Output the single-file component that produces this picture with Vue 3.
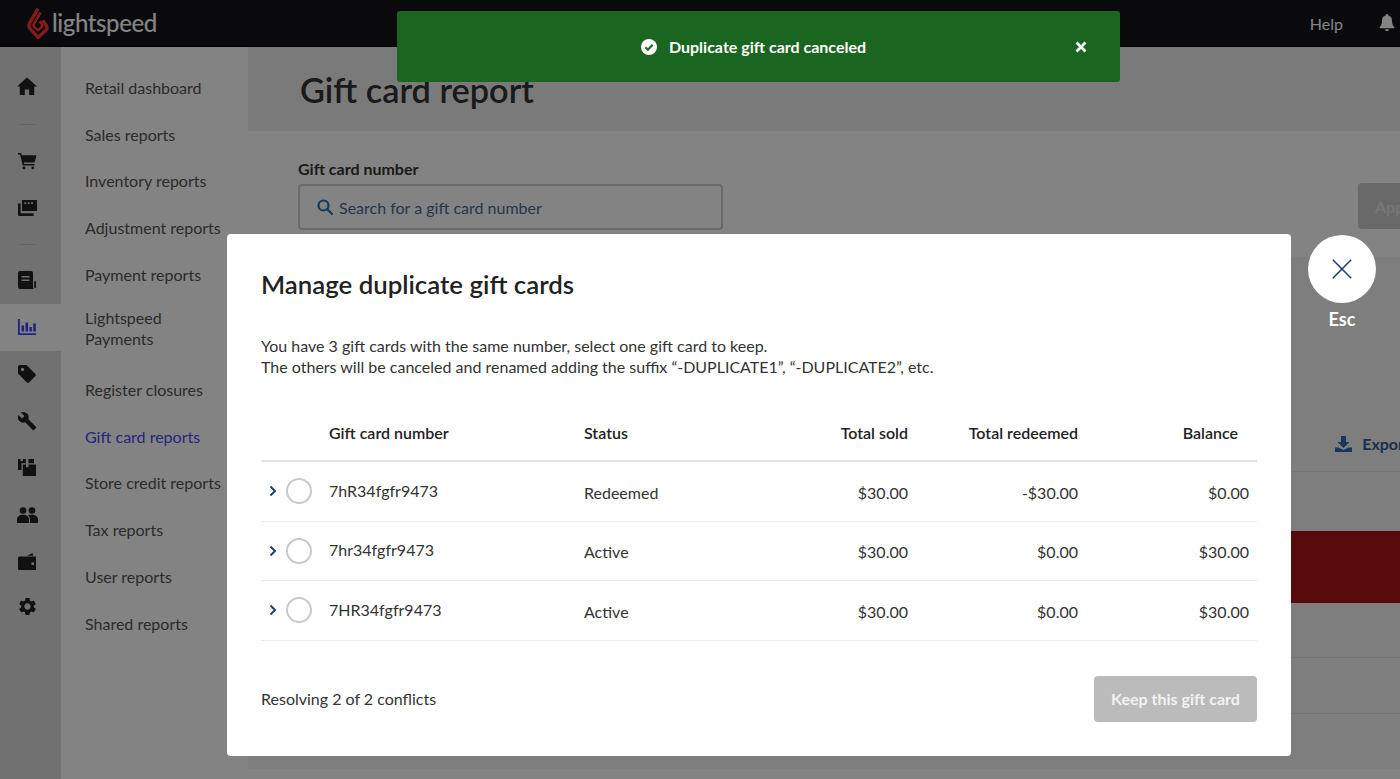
<template>
  <div class="page">
    <header class="topbar">
      <div class="logo">
        <svg class="flame" viewBox="0 0 22 32" width="22" height="32">
          <path d="M11 1.500 2.600 16.200c-1 1.800-.8 3.800.5 5.300L11 30.500l7.200-6.400c1.900-1.800 2.100-4.300.7-6.200l-3.400-4.600" fill="none" stroke="#b01c1c" stroke-width="3.400" stroke-linejoin="round" />
          <path d="M13.600 5.500 7 16.600c-.8 1.400-.5 2.900.6 3.800l3.400 2.900 3.400-3c1-1 1-2.300.2-3.300l-2-2.600" fill="none" stroke="#b01c1c" stroke-width="2.600" stroke-linejoin="round" />
        </svg>
        <span class="logo-text">lightspeed</span>
      </div>
      <div class="top-right">
        <span class="help">Help</span>
        <svg viewBox="0 0 16 18" width="16" height="18" fill="#9a9a9a">
          <path d="M8 0a1.300 1.300 0 0 0-1.300 1.400C4.200 2 3 4 3 6.500c0 4-1.200 5.300-2.300 6.500-.4.500-.1 1.200.6 1.200h13.400c.7 0 1-.7.6-1.200C14.200 11.800 13 10.500 13 6.500c0-2.500-1.200-4.500-3.700-5.100A1.300 1.300 0 0 0 8 0Z" />
          <path d="M6 15.300h4a2 2 0 0 1-4 0Z" />
        </svg>
      </div>
    </header>

    <div class="body">
      <nav class="rail">
        <a class="rail-item">
          <svg viewBox="0 0 20 18" width="20" height="18"><path d="M10 .5 20 9.500h-2.800V18h-5v-5.600H7.800V18h-5V9.500H0Z" /></svg>
        </a>
        <div class="rail-sep"><i></i></div>
        <a class="rail-item">
          <svg viewBox="0 0 20 18" width="19" height="18"><path d="M0 .5h3.300l.7 2.500h15.500l-2 7.500H6l.4 1.700h11v1.600H5L2.200 2.100H0Z" /><circle cx="6.300" cy="16.300" r="1.500" /><circle cx="15.500" cy="16.300" r="1.500" /></svg>
        </a>
        <a class="rail-item">
          <svg viewBox="0 0 19 16" width="19" height="16">
            <path d="M4 0h15v11H4Zm2.500 2.200v1.800h1.800V2.200Zm3.300 0v1.800h1.800V2.200Zm3.300 0v1.800h1.800V2.200Z" fill-rule="evenodd" />
            <path d="M0 3.500h2.600v9.700h13v2.700H1.500A1.500 1.500 0 0 1 0 14.400Z" />
          </svg>
        </a>
        <div class="rail-sep"><i></i></div>
        <a class="rail-item">
          <svg viewBox="0 0 18 18" width="18" height="18">
            <path d="M2 0h11a2 2 0 0 1 2 2v14a2 2 0 0 0 .6 1.500V18H2a2 2 0 0 1-2-2V2a2 2 0 0 1 2-2Zm1.500 5v1.500h8V5Zm0 3.500V10h8V8.500Z" fill-rule="evenodd" />
            <rect x="16.200" y="10" width="1.800" height="7" rx=".9" />
          </svg>
        </a>
        <a class="rail-item active">
          <svg viewBox="0 0 18 16" width="18" height="16"><path d="M0 0h1.800v14.200H18V16H0Zm3.500 6.500h2.600v6H3.500Zm4-3h2.600v9H7.500Zm4 4.500h2.400v4.500h-2.400Zm3.700-3.500h2.600v8h-2.600Z" /></svg>
        </a>
        <a class="rail-item">
          <svg viewBox="0 0 18 18" width="18" height="18"><path d="M0 1.500A1.500 1.500 0 0 1 1.500 0h7l8.900 8.900c.6.600.6 1.500 0 2.100l-6.400 6.400c-.6.600-1.500.6-2.100 0L0 8.500Zm4.500 4.700a1.700 1.700 0 1 0 0-3.400 1.700 1.700 0 0 0 0 3.400Z" fill-rule="evenodd" /></svg>
        </a>
        <a class="rail-item">
          <svg viewBox="0 0 24 24" width="20" height="20"><path d="M22.700 19l-9.100-9.100c.9-2.300.4-5-1.500-6.900-2-2-5-2.400-7.400-1.300L9 6 6 9 1.600 4.700C.4 7.100.9 10.100 2.900 12.100c1.900 1.900 4.600 2.400 6.900 1.500l9.100 9.100c.4.400 1 .4 1.400 0l2.300-2.300c.5-.4.5-1.100.1-1.400z" /></svg>
        </a>
        <a class="rail-item">
          <svg viewBox="0 0 18 17" width="18" height="17"><path d="M0 0h2.500v2H5V0h2.800v4.200H3.500V11H0Zm4.800 5.500H8v2.700h2.500V5.500H18V17H4.800Zm5.700-5.500H16v4.200h-5.500Z" /></svg>
        </a>
        <a class="rail-item">
          <svg viewBox="0 0 21 16" width="21" height="16">
            <circle cx="6" cy="3.500" r="3.300" /><circle cx="15" cy="3.500" r="3.300" />
            <path d="M0 16v-3.500C0 9.500 2.500 7.700 6 7.700s6 1.800 6 4.800V16Z" />
            <path d="M13 16v-3.500c0-1.900-.8-3.400-2-4.300 1-.4 2.500-.5 4-.5 3.500 0 6 1.800 6 4.800V16Z" />
          </svg>
        </a>
        <a class="rail-item">
          <svg viewBox="0 0 18 17" width="18" height="17"><path d="M9 2.800 14.500 0l.8 2.800Z" /><path d="M0 5a1.500 1.500 0 0 1 1.500-1.500H18V17H1.500A1.500 1.500 0 0 1 0 15.500Zm13.500 4.500v2.500H16V9.500Z" fill-rule="evenodd" /></svg>
        </a>
        <a class="rail-item gear">
          <svg viewBox="0 0 24 24" width="21" height="21"><path d="M19.140 12.940c.04-.3.06-.61.06-.94 0-.32-.02-.64-.07-.94l2.030-1.580c.18-.14.23-.41.12-.61l-1.920-3.320c-.12-.22-.37-.29-.59-.22l-2.390.96c-.5-.38-1.030-.7-1.620-.94l-.36-2.540c-.04-.24-.24-.41-.48-.41h-3.840c-.24 0-.43.17-.47.41l-.36 2.540c-.59.24-1.130.57-1.620.94l-2.390-.96c-.22-.08-.47 0-.59.22L2.740 8.870c-.12.21-.08.47.12.61l2.030 1.580c-.05.3-.09.63-.09.94s.02.64.07.94l-2.030 1.580c-.18.14-.23.41-.12.61l1.920 3.320c.12.22.37.29.59.22l2.390-.96c.5.38 1.030.7 1.620.94l.36 2.540c.05.24.24.41.48.41h3.840c.24 0 .44-.17.47-.41l.36-2.540c.59-.24 1.130-.56 1.620-.94l2.390.96c.22.08.47 0 .59-.22l1.920-3.320c.12-.22.07-.47-.12-.61l-2.010-1.580zM12 15.600c-1.980 0-3.600-1.620-3.600-3.600s1.620-3.600 3.600-3.600 3.600 1.620 3.600 3.600-1.620 3.600-3.600 3.600z" /></svg>
        </a>
      </nav>

      <aside class="subnav">
        <a
          v-for="link in reportLinks"
          :key="link.label"
          class="subnav-item"
          :class="{ current: link.current, tall: link.tall }"
        >{{ link.label }}</a>
      </aside>

      <main class="main">
        <div class="main-head">
          <h1>Gift card report</h1>
        </div>
        <section class="filters">
          <div class="field">
            <label>Gift card number</label>
            <div class="search">
              <svg viewBox="0 0 16 16" width="16" height="16" fill="none" stroke="#2f6bb0" stroke-width="2.200">
                <circle cx="6.500" cy="6.500" r="5" /><path d="m10.200 10.200 4.800 4.800" stroke-linecap="round" />
              </svg>
              <span>Search for a gift card number</span>
            </div>
          </div>
          <button class="apply">Apply</button>
        </section>
        <div class="toolbar">
          <span class="export">
            <svg viewBox="0 0 17 16" width="17" height="16" fill="#2f6bb0"><path d="M6 0h5v6h3.500l-6 6-6-6H6Z" /><path d="M0 11.500h3.500L8.500 14l5-2.500H17V16H0Z" /></svg>
            Export
          </span>
        </div>
        <div class="back-row"></div>
        <div class="back-alert"></div>
        <div class="back-row first"></div>
        <div class="back-row short"></div>
        <div class="back-row short"></div>
      </main>
    </div>

    <div class="overlay">
      <div class="modal">
        <h2>Manage duplicate gift cards</h2>
        <p class="intro">
          You have 3 gift cards with the same number, select one gift card to keep.<br />
          The others will be canceled and renamed adding the suffix “-DUPLICATE1”, “-DUPLICATE2”, etc.
        </p>

        <div class="table">
          <div class="row head">
            <span></span>
            <span>Gift card number</span>
            <span>Status</span>
            <span class="num">Total sold</span>
            <span class="num">Total redeemed</span>
            <span class="num last">Balance</span>
          </div>
          <div v-for="card in cards" :key="card.number" class="row">
            <span class="pick">
              <svg viewBox="0 0 8 12" width="8" height="12" fill="none" stroke="#1f3f74" stroke-width="2"><path d="m1.500 1.500 4.500 4.500-4.500 4.500" /></svg>
              <i class="radio"></i>
            </span>
            <span class="card-number">{{ card.number }}</span>
            <span>{{ card.status }}</span>
            <span class="num">{{ card.sold }}</span>
            <span class="num">{{ card.redeemed }}</span>
            <span class="num">{{ card.balance }}</span>
          </div>
        </div>

        <div class="modal-foot">
          <span>Resolving 2 of 2 conflicts</span>
          <button class="keep">Keep this gift card</button>
        </div>
      </div>

      <div class="close-box">
        <div class="close-circle">
          <svg viewBox="0 0 20 20" width="20" height="20" fill="none" stroke="#1d3c72" stroke-width="1.500"><path d="m.8.800 18.400 18.400M19.200.8.800 19.200" /></svg>
        </div>
        <span>Esc</span>
      </div>
    </div>

    <div class="toast">
      <svg viewBox="0 0 16 16" width="16" height="16">
        <circle cx="8" cy="8" r="8" fill="#fff" />
        <path d="m4.400 8.300 2.500 2.500 4.700-5" fill="none" stroke="#1a651f" stroke-width="2" />
      </svg>
      <span>Duplicate gift card canceled</span>
      <svg class="toast-x" viewBox="0 0 12 12" width="12" height="12" fill="none" stroke="#fff" stroke-width="2.800"><path d="m1.500 1.500 9 9M10.500 1.500l-9 9" /></svg>
    </div>
  </div>
</template>

<script setup>
const reportLinks = [
  { label: 'Retail dashboard' },
  { label: 'Sales reports' },
  { label: 'Inventory reports' },
  { label: 'Adjustment reports' },
  { label: 'Payment reports' },
  { label: 'Lightspeed Payments', tall: true },
  { label: 'Register closures' },
  { label: 'Gift card reports', current: true },
  { label: 'Store credit reports' },
  { label: 'Tax reports' },
  { label: 'User reports' },
  { label: 'Shared reports' },
]

const cards = [
  { number: '7hR34fgfr9473', status: 'Redeemed', sold: '$30.00', redeemed: '-$30.00', balance: '$0.00' },
  { number: '7hr34fgfr9473', status: 'Active', sold: '$30.00', redeemed: '$0.00', balance: '$30.00' },
  { number: '7HR34fgfr9473', status: 'Active', sold: '$30.00', redeemed: '$0.00', balance: '$30.00' },
]
</script>

<style>
html,
body {
  margin: 0;
  height: 100%;
  overflow: hidden;
}
</style>

<style scoped>
.page {
  position: relative;
  width: 1400px;
  height: 779px;
  overflow: hidden;
  font-family: Lato, "Liberation Sans", sans-serif;
  color: #2d2d2d;
}

.topbar {
  height: 46px;
  background: #14141a;
  border-bottom: 1px solid #000;
  display: flex;
  align-items: center;
  justify-content: space-between;
  padding: 0 5px 0 27px;
}

.logo {
  display: flex;
  align-items: center;
  gap: 3px;
}

.flame {
  filter: brightness(1.9);
}

.logo-text {
  font-size: 24px;
  font-weight: 500;
  letter-spacing: -0.4px;
  color: #fff;
  margin-bottom: 2px;
}

.top-right {
  display: flex;
  align-items: center;
  gap: 36px;
  color: #fff;
  font-size: 16px;
}

.top-right svg {
  filter: brightness(1.9);
}

.body {
  display: flex;
  height: 733px;
  background: #fff;
}

.rail {
  width: 61px;
  flex: none;
  background: #dcdcdc;
  padding-top: 16px;
  box-sizing: border-box;
}

.rail-item {
  height: 47px;
  display: flex;
  align-items: center;
  justify-content: center;
  padding: 0 7px 2px 0;
  box-sizing: border-box;
  color: #000;
}

.rail-item svg {
  fill: #222;
}

.rail-item.active {
  background: #fff;
}

.rail-item.active svg {
  fill: #4040ff;
}

.gear {
  padding-bottom: 6px;
}

.rail-sep {
  height: 28px;
  display: flex;
  align-items: center;
  padding-left: 19px;
}

.rail-sep + .rail-item + .rail-item + .rail-sep {
  height: 25px;
}

.rail-sep i {
  width: 17px;
  height: 1px;
  background: #c4c4c4;
}

.subnav {
  width: 187px;
  flex: none;
  padding: 17px 0 0 24px;
  box-sizing: border-box;
  background: #fff;
}

.subnav-item {
  display: flex;
  align-items: center;
  height: 46.8px;
  font-size: 16px;
  line-height: 21px;
  color: #555;
}

.subnav-item.tall {
  height: 68px;
  padding-right: 60px;
  padding-bottom: 7px;
  box-sizing: border-box;
}

.subnav-item.current {
  color: #4a4af0;
}

.main {
  flex: 1;
  min-width: 0;
  overflow: hidden;
}

.main-head {
  height: 84px;
  background: #eeeeee;
  padding-left: 52px;
  display: flex;
  align-items: center;
  box-sizing: border-box;
}

.main-head h1 {
  margin: 1px 0 0;
  font-size: 34.3px;
  font-weight: 600;
  color: #333;
}

.filters {
  height: 126px;
  background: #fff;
  padding: 27px 0 0 50px;
  box-sizing: border-box;
  display: flex;
  justify-content: space-between;
}

.field label {
  display: block;
  font-size: 16px;
  font-weight: 700;
  line-height: 22px;
  color: #333;
  margin-bottom: 4px;
}

.search {
  width: 425px;
  height: 46px;
  border: 2px solid #cfcfcf;
  border-radius: 4px;
  box-sizing: border-box;
  display: flex;
  align-items: center;
  gap: 6px;
  padding-left: 17px;
  font-size: 16px;
  color: #4b6a90;
}

.apply {
  width: 100px;
  height: 46px;
  margin: 25px -58px 0 0;
  border: none;
  border-radius: 4px;
  background: #cdcdcd;
  color: #e6e6e6;
  font: 700 16px Lato, sans-serif;
  text-align: left;
  padding-left: 17px;
}

.toolbar {
  height: 214px;
  background: #f6f6f6;
  display: flex;
  justify-content: flex-end;
  align-items: flex-end;
  padding-bottom: 18px;
  box-sizing: border-box;
}

.export {
  display: flex;
  align-items: center;
  gap: 10px;
  margin-right: -10px;
  color: #2f5f9e;
  font-size: 16px;
  font-weight: 700;
  white-space: nowrap;
}

.back-row {
  height: 60px;
  background: #f6f6f6;
  border-top: 1px solid #e2e2e2;
  box-sizing: border-box;
}

.back-alert {
  height: 72px;
  background: #ac1515;
}

.back-row.first {
  height: 54px;
  border-top: none;
}

.back-row.short {
  height: 56px;
}

.overlay {
  position: absolute;
  inset: 0;
  background: rgba(0, 0, 0, 0.485);
  display: flex;
  align-items: flex-start;
  padding: 234px 0 0 227px;
  box-sizing: border-box;
}

.modal {
  width: 1064px;
  height: 522px;
  flex: none;
  background: #fff;
  border-radius: 4px;
  padding: 34px 34px 0;
  box-sizing: border-box;
}

.modal h2 {
  margin: 0;
  font-size: 25.8px;
  font-weight: 600;
  line-height: 32px;
  color: #222;
}

.intro {
  margin: 35px 0 0;
  font-size: 16px;
  line-height: 21px;
  color: #333;
}

.table {
  margin-top: 27px;
}

.row {
  display: grid;
  grid-template-columns: 68px 255px 150px 174px 170px 179px;
  align-items: center;
  height: 59.5px;
  padding-top: 2px;
  border-bottom: 1px solid #ececec;
  box-sizing: border-box;
  font-size: 16px;
  color: #333;
}

.row.head {
  height: 58px;
  padding-top: 0;
  border-bottom: 2px solid #e4e4e4;
  font-weight: 600;
  color: #222;
}

.num {
  text-align: right;
}

.row > .num:last-child {
  padding-right: 8px;
}

.row.head > .num.last {
  padding-right: 19px;
}

.pick {
  display: flex;
  align-items: center;
  gap: 9px;
  padding-left: 8px;
  margin-top: -2px;
}

.radio {
  width: 26px;
  height: 26px;
  border: 2px solid #c9c9c9;
  border-radius: 50%;
  box-sizing: border-box;
}

.card-number {
  margin-top: -4px;
}

.modal-foot {
  display: flex;
  justify-content: space-between;
  align-items: center;
  margin-top: 35px;
  font-size: 16px;
  color: #333;
}

.keep {
  width: 163px;
  height: 46px;
  border: none;
  border-radius: 4px;
  background: #bbbbbb;
  color: #f2f2f2;
  font: 700 16px Lato, sans-serif;
}

.close-box {
  margin: 1px 0 0 17px;
  width: 68px;
  display: flex;
  flex-direction: column;
  align-items: center;
  gap: 5px;
  color: #fff;
  font-size: 18px;
  font-weight: 700;
}

.close-circle {
  width: 68px;
  height: 68px;
  border-radius: 50%;
  background: #fff;
  display: flex;
  align-items: center;
  justify-content: center;
}

.toast {
  position: absolute;
  top: 11px;
  left: 397px;
  width: 723px;
  height: 71px;
  background: #1a651f;
  border-radius: 3px;
  display: flex;
  align-items: center;
  justify-content: center;
  gap: 12px;
  color: #fff;
  font-size: 16px;
  font-weight: 700;
  padding-right: 10px;
  box-sizing: border-box;
}

.toast-x {
  position: absolute;
  right: 33px;
  top: 30px;
}
</style>
